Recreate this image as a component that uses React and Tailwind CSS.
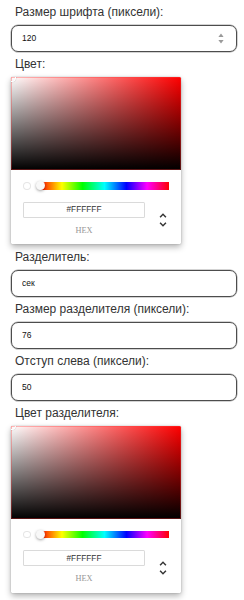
import React from 'react';

const Label = ({ children }) => (
  <div className="pl-[4px] text-[12px] leading-[16px] text-[#333] mb-[5px]">{children}</div>
);

const TextBox = ({ value, spinner }) => (
  <div className="flex h-[27px] w-[226px] items-center rounded-[7px] border border-[#4d4d4d] pl-[10px] pr-[12px] mb-[4px] shadow-[0_0_0_0.5px_rgba(80,80,80,0.5)]">
    <input
      readOnly
      value={value}
      className="min-w-0 flex-1 bg-transparent text-[8.5px] text-[#111] outline-none font-['Liberation_Sans',Arial,sans-serif]"
    />
    {spinner && (
      <svg width="6" height="11" viewBox="0 0 6 11" className="shrink-0">
        <path d="M3 0.5L5.6 4H0.4Z" fill="#9a9a9a" />
        <path d="M3 10.5L5.6 7H0.4Z" fill="#9a9a9a" />
      </svg>
    )}
  </div>
);

const ColorPicker = () => (
  <div className="mb-[5px] w-[170px] rounded-[1.5px] bg-white shadow-[0_0_1.5px_rgba(0,0,0,0.3),0_3px_6px_rgba(0,0,0,0.3)]">
    {/* saturation */}
    <div className="relative h-[93px] overflow-hidden rounded-t-[1.5px] bg-[#f00]">
      <div className="absolute inset-0 bg-[linear-gradient(to_right,#fff,rgba(255,255,255,0))]" />
      <div className="absolute inset-0 bg-[linear-gradient(to_top,#000,rgba(0,0,0,0))]" />
      <div className="absolute inset-0 shadow-[inset_0_0_0_1px_rgba(255,60,60,0.35)]" />
      <div className="absolute -left-[4.5px] -top-[4.5px] h-[9px] w-[9px] rounded-full shadow-[inset_0_0_0_1px_#fff,0_0_1px_0.5px_rgba(0,0,0,0.15)]" />
    </div>
    {/* body */}
    <div className="px-[12px] pt-[12px] pb-[9px]">
      <div className="flex">
        <div className="w-[17px]">
          <div className="h-[7.5px] w-[7.5px] rounded-full bg-white shadow-[inset_0_0_0_1px_rgba(0,0,0,0.1)]" />
        </div>
        <div className="relative h-[7.5px] flex-1 bg-[linear-gradient(to_right,#f00_0%,#ff0_17%,#0f0_33%,#0ff_50%,#00f_67%,#f0f_83%,#f00_100%)]">
          <div className="absolute -left-[4.5px] -top-[1px] h-[9px] w-[9px] rounded-full bg-[#f8f8f8] shadow-[0_1px_3px_rgba(0,0,0,0.37)]" />
        </div>
      </div>
      <div className="flex pt-[12px]">
        <div className="flex-1">
          <div className="flex h-[16px] items-center justify-center rounded-[1.5px] text-[8.3px] text-[#333] shadow-[inset_0_0_0_1px_#dadada]">
            #FFFFFF
          </div>
          <div className="mt-[9px] text-center text-[8.3px] leading-[8.3px] uppercase text-[#969696] font-['Liberation_Serif',serif]">
            hex
          </div>
        </div>
        <div className="relative w-[24px]">
          <svg
            viewBox="0 0 24 24"
            className="absolute right-[-3px] top-[9px] h-[18px] w-[18px]"
          >
            <path fill="#333" d="M12,5.83L15.17,9L16.58,7.59L12,3L7.41,7.59L8.83,9L12,5.83Z" />
            <path fill="#333" d="M12,18.17L8.83,15L7.42,16.41L12,21L16.59,16.41L15.17,15L12,18.17Z" />
          </svg>
        </div>
      </div>
    </div>
  </div>
);

export default function App() {
  return (
    <div className="min-h-[600px] bg-white pl-[11px] pr-[7px] pt-[4px] font-['Liberation_Sans',Arial,sans-serif]">
      <Label>Размер шрифта (пиксели):</Label>
      <TextBox value="120" spinner />

      <Label>Цвет:</Label>
      <ColorPicker />

      <Label>Разделитель:</Label>
      <TextBox value="сек" />

      <Label>Размер разделителя (пиксели):</Label>
      <TextBox value="76" />

      <Label>Отступ слева (пиксели):</Label>
      <TextBox value="50" />

      <Label>Цвет разделителя:</Label>
      <ColorPicker />
    </div>
  );
}
